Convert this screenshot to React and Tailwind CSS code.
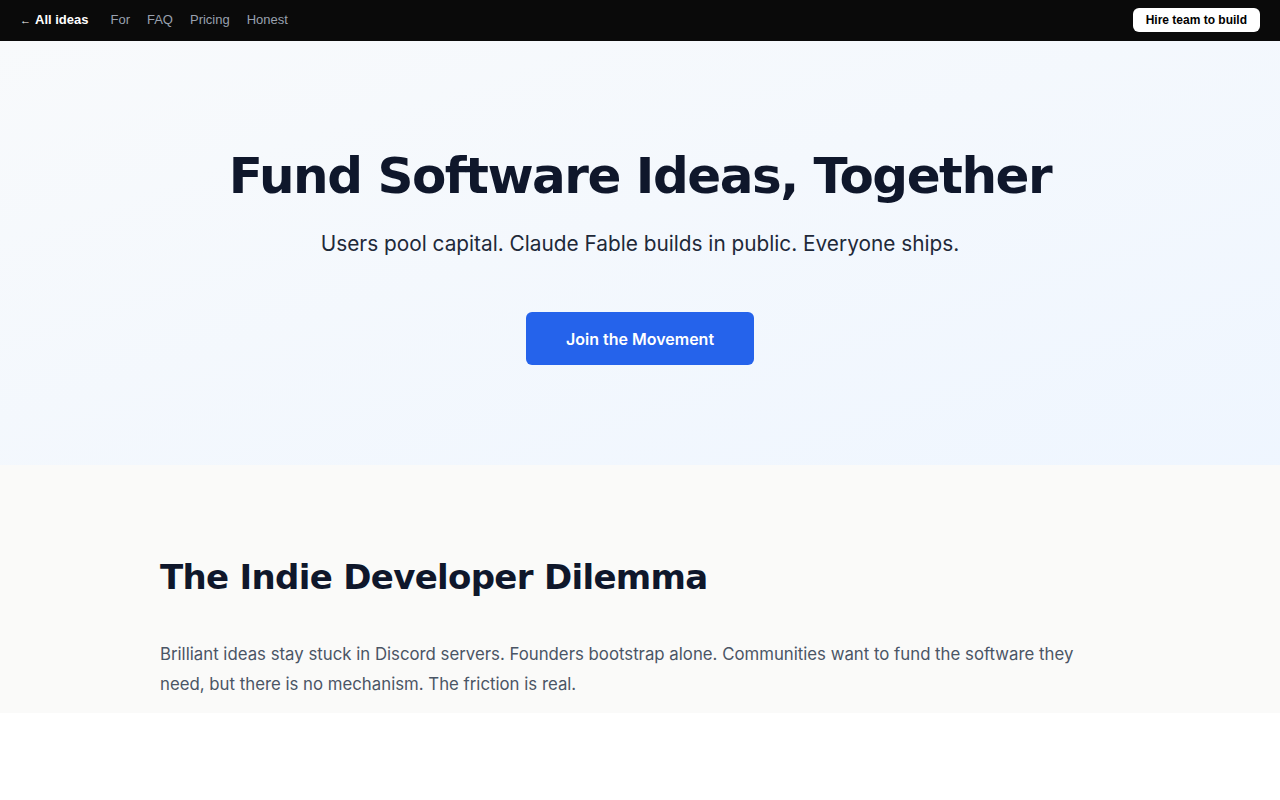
import React from "react";

const navLinks = ["For", "FAQ", "Pricing", "Honest"];

const TopBar = () => (
  <header className="h-[41px] bg-[#0a0a0a] px-5 flex items-center justify-between font-['Liberation_Sans',Arial,sans-serif]">
    <div className="flex items-center -mt-px">
      <a href="#" className="text-[13px] font-bold text-white">
        <span className="text-[11px] mr-1">←</span>All ideas
      </a>
      <nav className="flex items-center gap-[17px] ml-[22px]">
        {navLinks.map((link) => (
          <a key={link} href="#" className="text-[13px] text-gray-400 hover:text-white">
            {link}
          </a>
        ))}
      </nav>
    </div>
    <button className="bg-white text-black text-[12px] font-bold rounded-md px-[13px] h-6 -mt-px">
      Hire team to build
    </button>
  </header>
);

const Hero = () => (
  <section className="bg-linear-to-br from-slate-50 to-blue-50 pt-[105px] pb-[100px] text-center">
    <h1 className="font-['DejaVu_Sans',sans-serif] font-bold text-[50px] leading-[60px] tracking-[-0.03em] text-slate-900">
      Fund Software Ideas, Together
    </h1>
    <p className="mt-6 font-['Inter',sans-serif] text-[20.8px] leading-7 text-gray-800">
      Users pool capital. Claude Fable builds in public. Everyone ships.
    </p>
    <button className="mt-[54px] h-[53px] px-10 rounded-md bg-[#2563eb] text-white font-['Inter',sans-serif] font-semibold text-base hover:bg-[#1d4ed8]">
      Join the Movement
    </button>
  </section>
);

const Dilemma = () => (
  <section className="bg-stone-50 pt-[88px] pb-[14px]">
    <div className="max-w-5xl mx-auto px-8">
      <h2 className="font-['DejaVu_Sans',sans-serif] font-bold text-[34px] leading-[48px] tracking-[-0.02em] text-slate-900">
        The Indie Developer Dilemma
      </h2>
      <p className="mt-[38px] font-['Inter',sans-serif] text-[16.8px] leading-[30px] text-gray-600">
        Brilliant ideas stay stuck in Discord servers. Founders bootstrap alone. Communities want to
        fund the software they need, but there is no mechanism. The friction is real.
      </p>
    </div>
  </section>
);

export default function App() {
  return (
    <div className="min-h-screen bg-white">
      <TopBar />
      <Hero />
      <Dilemma />
    </div>
  );
}
